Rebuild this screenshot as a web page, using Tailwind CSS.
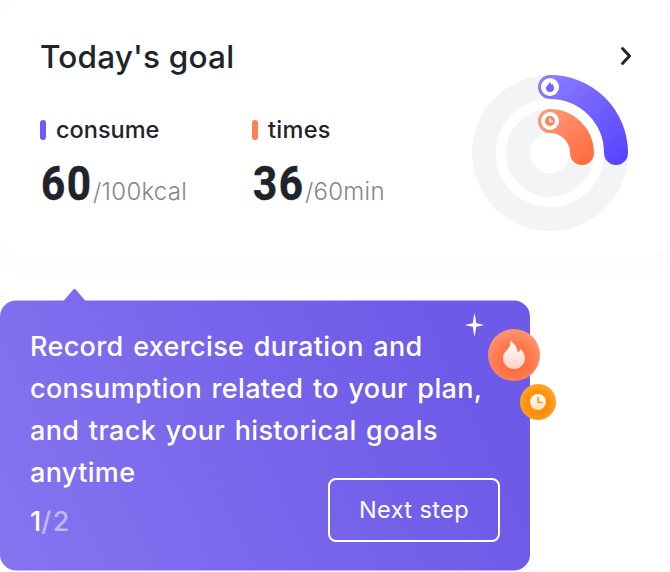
<!DOCTYPE html>
<html lang="en">
<head>
<meta charset="utf-8">
<title>Today's goal</title>
<script src="https://cdn.jsdelivr.net/npm/@tailwindcss/browser@4"></script>
</head>
<body class="w-[670px] h-[572px] overflow-hidden bg-white font-['Inter','Liberation_Sans',sans-serif] text-[#20242a]">
<main class="flex flex-col h-[572px]">
  <section class="h-[256px] shrink-0 rounded-[20px] bg-white shadow-[0_8px_32px_rgba(0,0,0,0.02)] flex justify-between pl-10 pr-9">
    <div class="pt-[37px]">
      <h1 class="h-10 leading-10 text-[31.5px] font-medium whitespace-nowrap tracking-[0.2px]">Today's goal</h1>
      <div class="flex mt-[37px]">
        <div class="w-[212px]">
          <div class="flex items-center gap-[10px] h-8">
            <i class="w-[6px] h-5 rounded-[3px] bg-[#6a5dfb]"></i>
            <span class="text-[23.5px] font-medium">consume</span>
          </div>
          <div class="flex items-baseline h-[60px] mt-2 whitespace-nowrap">
            <span class="w-[53px] pl-px"><b class="inline-block origin-left scale-x-[0.88] font-['Roboto'] font-bold text-[48px] leading-[60px] tracking-[1.8px] [-webkit-text-stroke:0.5px_#20242a]">60</b></span>
            <span class="text-[24px] font-light text-[#85878a] tracking-[0.25px]">/100kcal</span>
          </div>
        </div>
        <div>
          <div class="flex items-center gap-[10px] h-8">
            <i class="w-[6px] h-5 rounded-[3px] bg-[#ff8057]"></i>
            <span class="text-[23.5px] font-medium tracking-[0.3px]">times</span>
          </div>
          <div class="flex items-baseline h-[60px] mt-2 whitespace-nowrap">
            <span class="w-[53px] pl-px"><b class="inline-block origin-left scale-x-[0.88] font-['Roboto'] font-bold text-[48px] leading-[60px] tracking-[1.8px] [-webkit-text-stroke:0.5px_#20242a]">36</b></span>
            <span class="text-[24px] font-light text-[#85878a] tracking-[0.25px]">/60min</span>
          </div>
        </div>
      </div>
    </div>
    <div class="w-[162px] pt-[46px] flex flex-col">
      <svg class="self-end w-[16px] h-[20px]" viewBox="0 0 16 20" fill="none" stroke="#20242a" stroke-width="3" stroke-linecap="round" stroke-linejoin="round"><path d="M4.5 2.5 11.5 10 4.5 17.5"/></svg>
      <svg class="w-[156px] h-[156px] mt-[9px] shrink-0" viewBox="0 0 156 156" fill="none">
        <defs>
          <linearGradient id="purple" gradientUnits="userSpaceOnUse" x1="72" y1="5" x2="151" y2="91"><stop stop-color="#8b7cff"/><stop offset="1" stop-color="#5543fc"/></linearGradient>
          <linearGradient id="orange" gradientUnits="userSpaceOnUse" x1="72" y1="37" x2="116" y2="90"><stop stop-color="#ff9878"/><stop offset="1" stop-color="#ff6b3b"/></linearGradient>
        </defs>
        <circle cx="78" cy="78" r="66" stroke="#f3f4f6" stroke-width="24"/>
        <circle cx="78" cy="78" r="32" stroke="#f3f4f6" stroke-width="24"/>
        <path d="M78 12A66 66 0 0 1 144 78" stroke="url(#purple)" stroke-width="24" stroke-linecap="round"/>
        <path d="M78 46A32 32 0 0 1 110 78" stroke="url(#orange)" stroke-width="24" stroke-linecap="round"/>
        <circle cx="78" cy="12" r="9" fill="#fff"/>
        <path d="M77.7 7C78.4 7.7 79.3 8.8 79.5 10L80.4 9C81.3 10.2 82 11.6 82 13A4 4 0 0 1 74 13C74 11 77.2 9.7 77.7 7Z" fill="#7162fb"/>
        <circle cx="78" cy="46" r="9" fill="#fff"/>
        <circle cx="78" cy="46" r="5" fill="#ff825b"/>
        <path d="M78 43V46.5H81" stroke="#fff" stroke-width="1.5"/>
      </svg>
    </div>
  </section>

  <section class="relative isolate mt-[44px] w-[530px] h-[271px] shrink-0 px-[30px] pt-[26px] text-white">
    <svg class="absolute -z-10 left-0 top-[-12px] w-[530px] h-[283px]" viewBox="0 -12 530 283">
      <defs><linearGradient id="bubble" gradientUnits="userSpaceOnUse" x1="-4" y1="261" x2="534" y2="9.5"><stop stop-color="#8575f0"/><stop offset=".85" stop-color="#6d5ae8"/></linearGradient></defs>
      <rect y=".5" width="530" height="270" rx="16" fill="url(#bubble)"/>
      <path d="M63.5 1 73.5 -10.7Q74.5 -11.8 75.5 -10.7L85.5 1Z" fill="url(#bubble)"/>
    </svg>
    <p class="text-[27px] leading-[42px] font-medium whitespace-nowrap tracking-[0.35px] [word-spacing:2px]">Record exercise duration and<br>consumption related to your plan,<br>and track your historical goals<br>anytime</p>
    <div class="flex justify-between -mt-[16px]">
      <div class="pt-[24px] text-[27px] leading-[40px] font-medium">1<span class="text-white/50 text-[27px] tracking-[1.6px]">/2</span></div>
      <button class="w-[172px] h-16 border-2 border-white rounded-[8px] text-[23.5px] font-normal tracking-[0.4px]">Next step</button>
    </div>
    <svg class="absolute left-[464px] top-[13px] w-[20px] h-[24px]" viewBox="0 0 20 24"><path d="M10.5 0Q11.5 4.5 12.2 10.2 16 11 20 12 16 13 12.2 13.8 11.5 19.5 10.5 24 9.5 19.5 8.8 13.8 5 13 1 12 5 11 8.8 10.2 9.5 4.5 10.5 0Z" fill="#fff"/></svg>
    <svg class="absolute left-[488px] top-[29px] w-[52px] h-[52px]" viewBox="0 0 52 52">
      <defs>
        <radialGradient id="flameBg" cx=".5" cy=".62" r=".58"><stop stop-color="#ff6433"/><stop offset=".55" stop-color="#ff774b"/><stop offset="1" stop-color="#ff9270"/></radialGradient>
        <linearGradient id="flame" x1="0" y1="0" x2="0" y2="1"><stop stop-color="#fff"/><stop offset="1" stop-color="#ffd2c4"/></linearGradient>
      </defs>
      <circle cx="26" cy="26" r="26" fill="url(#flameBg)"/>
      <path d="M22.4 12C26 14 29.2 17.8 29.8 23.3 31.2 22.6 32 21.6 32.5 20 35 22.2 37 25.5 37 29 37 35.2 32.3 40 26 40S15 35.2 15 29C15 22 23.5 20 22.4 12Z" fill="url(#flame)"/>
    </svg>
    <svg class="absolute left-[520px] top-[84px] w-[36px] h-[36px]" viewBox="0 0 36 36">
      <defs>
        <radialGradient id="clockBg" cx=".5" cy=".55" r=".55"><stop stop-color="#ff8500"/><stop offset=".55" stop-color="#ff8f0b"/><stop offset="1" stop-color="#ffa629"/></radialGradient>
        <linearGradient id="clock" x1="0" y1="0" x2="0" y2="1"><stop stop-color="#fff"/><stop offset="1" stop-color="#ffdfb8"/></linearGradient>
      </defs>
      <circle cx="18" cy="18" r="18" fill="url(#clockBg)"/>
      <circle cx="18" cy="18" r="8" fill="url(#clock)"/>
      <path d="M18 13.4V18.5H22" fill="none" stroke="#ff920f" stroke-width="1.6" stroke-linecap="round" stroke-linejoin="round"/>
    </svg>
  </section>
</main>
</body>
</html>
